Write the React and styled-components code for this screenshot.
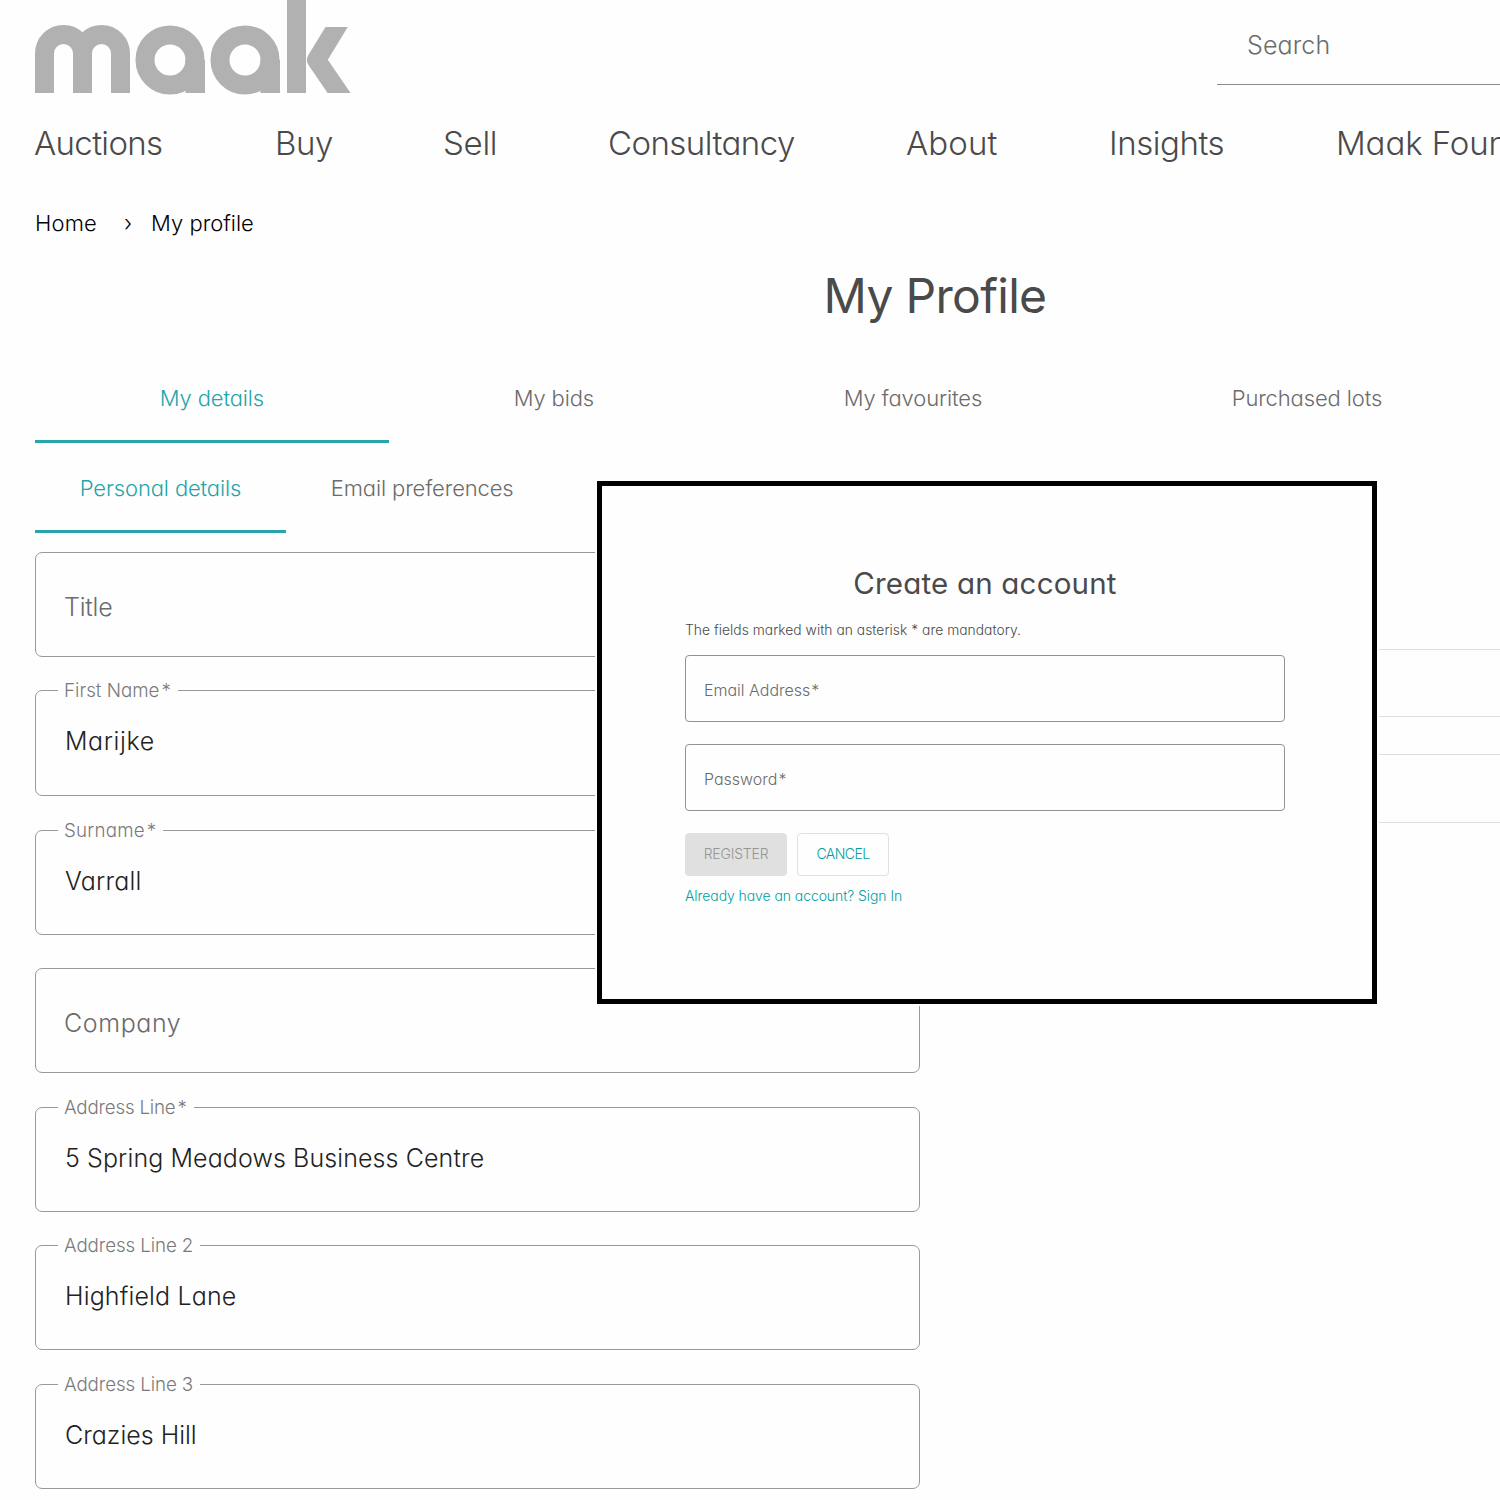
import styled, { createGlobalStyle } from "styled-components";

// global styles
const GlobalStyle = createGlobalStyle`
  *, *::before, *::after {
    box-sizing: border-box;
  }

  body {
    margin: 0;
    background: #fefefe;
    color: #4a4a4a;
    font-family: Inter, "Open Sans", sans-serif;
    font-weight: 300;
    /* single-storey a */
    font-feature-settings: "cv11";
  }
`;

// data
const navItems = [
  { id: "auctions", label: "Auctions", spacing: -0.65 },
  { id: "buy", label: "Buy", spacing: -0.4 },
  { id: "sell", label: "Sell", spacing: -0.3 },
  { id: "consultancy", label: "Consultancy", spacing: -0.55 },
  { id: "about", label: "About", spacing: 0.1 },
  { id: "insights", label: "Insights", spacing: -0.45 },
  { id: "foundation", label: "Maak Foundation", spacing: -0.1 },
];

const tabs = ["My details", "My bids", "My favourites", "Purchased lots"];
const subTabs = ["Personal details", "Email preferences"];

const fields = [
  { id: "title", label: "Title", spacing: -0.2 },
  { id: "firstName", label: "First Name", required: true, value: "Marijke", height: 106, spacing: 0.6, labelSpacing: 0 },
  { id: "surname", label: "Surname", required: true, value: "Varrall", labelSpacing: 0.2 },
  { id: "company", label: "Company", spacing: 0.6 },
  { id: "address1", label: "Address Line", required: true, value: "5 Spring Meadows Business Centre", spacing: 0.1, labelSpacing: -0.2 },
  { id: "address2", label: "Address Line 2", value: "Highfield Lane", spacing: 0.15 },
  { id: "address3", label: "Address Line 3", value: "Crazies Hill", spacing: 0 },
];

const Viewport = styled.div`
  width: 100%;
  height: 1500px;
  overflow: hidden;
`;

const Page = styled.div`
  position: relative;
  width: 1870px;
  height: 1500px;
  padding: 0 35px;
`;

const Header = styled.header`
  display: flex;
  justify-content: space-between;
  align-items: flex-start;
  height: 123px;
`;

const SearchBox = styled.div`
  width: 618px;
  height: 85px;
  padding: 30px 30px 0;
  border-bottom: 1px solid #8c8c8c;
  color: #6b6b6b;
  font-size: 25px;
  line-height: 30px;
  letter-spacing: 0.1px;
`;

const Nav = styled.nav`
  display: grid;
  grid-template-columns: 241px 168px 165px 298px 203px 227px auto;
  height: 40px;
  margin-left: -1px;
`;

const NavLink = styled.a`
  font-size: 33px;
  line-height: 40px;
  letter-spacing: ${(p) => p.$spacing}px;
  white-space: nowrap;
`;

const Breadcrumb = styled.div`
  display: flex;
  margin-top: 45px;
  color: #000;
  font-size: 22px;
  line-height: 30px;
`;

const Crumb = styled.span`
  letter-spacing: ${(p) => p.$spacing || 0}px;
`;

const CrumbSeparator = styled.span`
  width: 54px;
  padding-left: 27px;
`;

const PageTitle = styled.h1`
  margin: 28px 0 0;
  font-size: 48px;
  font-weight: 400;
  line-height: 60px;
  letter-spacing: -0.7px;
  text-align: center;
`;

const TabList = styled.div`
  display: flex;
  height: 90px;
  margin-top: ${(p) => p.$top || 0}px;
`;

const Tab = styled.div`
  display: flex;
  align-items: center;
  padding: 0 ${(p) => p.$pad}px;
  color: ${(p) => (p.$active ? "#1fa5aa" : "#6b6b6b")};
  box-shadow: ${(p) => (p.$active ? "inset 0 -3px #27a5aa" : "none")};
  font-size: 22px;
  line-height: 30px;
  letter-spacing: -0.13px;
  white-space: nowrap;
`;

const Content = styled.main`
  display: grid;
  grid-template-columns: 885px 870px;
  column-gap: 45px;
  align-items: start;
  margin-top: 19px;
`;

const Form = styled.form`
  display: grid;
  grid-template-rows: 138px 140px 138px 139px 138px 139px 105px;
  align-items: start;
`;

const FieldBox = styled.div`
  position: relative;
  height: ${(p) => p.$height || 105}px;
  padding: ${(p) => (p.$filled ? "35px 29px 0" : "39px 28px 0")};
  border: 1px solid #999;
  border-radius: 7px;
  color: ${(p) => (p.$filled ? "#222" : "#6b6b6b")};
  font-size: 25px;
  line-height: 30px;
  letter-spacing: ${(p) => p.$spacing ?? 0.2}px;
`;

// sits on top of the outline and cuts it open
const FloatingLabel = styled.label`
  position: absolute;
  top: -11px;
  left: 22px;
  padding: 0 7px 0 6px;
  background: #fefefe;
  color: #7a7a7a;
  font-size: 18.75px;
  line-height: 22px;
  letter-spacing: ${(p) => p.$spacing ?? -0.1}px;
`;

const Asterisk = styled.span`
  margin-left: ${(p) => p.$gap}px;
`;

const Aside = styled.aside`
  display: grid;
  gap: 37px;
  padding-top: 97px;
`;

const Panel = styled.div`
  height: ${(p) => p.$height}px;
  border: 1px solid #dedede;
  border-radius: 4px;
`;

const Dialog = styled.section`
  position: absolute;
  top: 481px;
  left: 597px;
  width: 780px;
  height: 523px;
  padding: 79px 87px 0 83px;
  border: 5px solid #000;
  background: #fefefe;
  box-shadow: 0 0 0 2px #fefefe;
`;

const DialogTitle = styled.h2`
  margin: 0;
  font-size: 29.5px;
  font-weight: 400;
  line-height: 36px;
  letter-spacing: 0.2px;
  text-align: center;
`;

const DialogNote = styled.p`
  margin: 19px 0 15px;
  font-size: 13.8px;
  line-height: 20px;
  letter-spacing: 0.04px;
`;

const DialogFields = styled.div`
  display: grid;
  gap: 22px;
`;

const DialogField = styled.div`
  height: 67px;
  padding: 24px 18px 0;
  border: 1px solid #929292;
  border-radius: 4px;
  color: #6b6b6b;
  font-size: 16px;
  line-height: 20px;
`;

const Actions = styled.div`
  display: flex;
  gap: 10px;
  margin: 22px 0 10px;
`;

const Button = styled.button`
  width: ${(p) => p.$width}px;
  height: 43px;
  padding: 0 0 2px;
  border: 1px solid #e0e0e0;
  border-radius: 4px;
  background: ${(p) => (p.disabled ? "#e0e0e0" : "#fefefe")};
  color: ${(p) => (p.disabled ? "#959595" : "#009fa4")};
  font: inherit;
  font-feature-settings: inherit;
  font-size: 14px;
  letter-spacing: ${(p) => p.$spacing}px;
`;

const SignInLink = styled.a`
  display: block;
  color: #009fa4;
  font-size: 14px;
  line-height: 20px;
  letter-spacing: -0.08px;
`;

function Logo() {
  return (
    <svg width="317" height="95" viewBox="35 0 317 95" fill="none" stroke="#b1b1b1" strokeWidth="19" role="img" aria-label="maak">
      <path d="M44.5 93V53.5a19 19 0 0 1 38 0V93M82.5 93V53.5a19 19 0 0 1 38 0V93" />
      {[0, 75].map((x) => (
        <g key={x} transform={`translate(${x} 0)`}>
          <circle cx="170" cy="60" r="25" />
          <rect x="185.5" y="60" width="19.5" height="33" fill="#b1b1b1" stroke="none" />
        </g>
      ))}
      <rect x="287" y="0" width="19" height="93" fill="#b1b1b1" stroke="none" />
      <svg x="306" y="27" width="46" height="66" viewBox="306 27 46 66">
        <path d="M347 10L316.5 60L352.8 113" strokeLinejoin="round" />
      </svg>
    </svg>
  );
}

function Field({ field }) {
  const { label, required, value, height, spacing, labelSpacing } = field;
  return (
    <FieldBox $filled={Boolean(value)} $height={height} $spacing={spacing}>
      {value && (
        <FloatingLabel $spacing={labelSpacing}>
          {label}
          {required && <Asterisk $gap={2}>*</Asterisk>}
        </FloatingLabel>
      )}
      {value || label}
    </FieldBox>
  );
}

function CreateAccountDialog() {
  return (
    <Dialog>
      <DialogTitle>Create an account</DialogTitle>
      <DialogNote>The fields marked with an asterisk * are mandatory.</DialogNote>
      <DialogFields>
        <DialogField>
          Email Address<Asterisk $gap={1}>*</Asterisk>
        </DialogField>
        <DialogField>
          Password<Asterisk $gap={1}>*</Asterisk>
        </DialogField>
      </DialogFields>
      <Actions>
        <Button $width={102} $spacing={-0.2} disabled>REGISTER</Button>
        <Button $width={92} $spacing={-0.55}>CANCEL</Button>
      </Actions>
      <SignInLink>Already have an account? Sign In</SignInLink>
    </Dialog>
  );
}

function App() {
  return (
    <Viewport>
      <GlobalStyle />
      <Page>
        <Header>
          <Logo />
          <SearchBox>Search</SearchBox>
        </Header>
        <Nav>
          {navItems.map((item) => (
            <NavLink key={item.id} $spacing={item.spacing}>{item.label}</NavLink>
          ))}
        </Nav>
        <Breadcrumb>
          <Crumb $spacing={0.2}>Home</Crumb>
          <CrumbSeparator>›</CrumbSeparator>
          <Crumb>My profile</Crumb>
        </Breadcrumb>
        <PageTitle>My Profile</PageTitle>
        <TabList $top={27}>
          {tabs.map((tab, i) => (
            <Tab key={tab} $pad={124.8} $active={i === 0}>{tab}</Tab>
          ))}
        </TabList>
        <TabList>
          {subTabs.map((tab, i) => (
            <Tab key={tab} $pad={44.8} $active={i === 0}>{tab}</Tab>
          ))}
        </TabList>
        <Content>
          <Form>
            {fields.map((field) => (
              <Field key={field.id} field={field} />
            ))}
          </Form>
          <Aside>
            <Panel $height={68} />
            <Panel $height={69} />
          </Aside>
        </Content>
        <CreateAccountDialog />
      </Page>
    </Viewport>
  );
}

export default App;
